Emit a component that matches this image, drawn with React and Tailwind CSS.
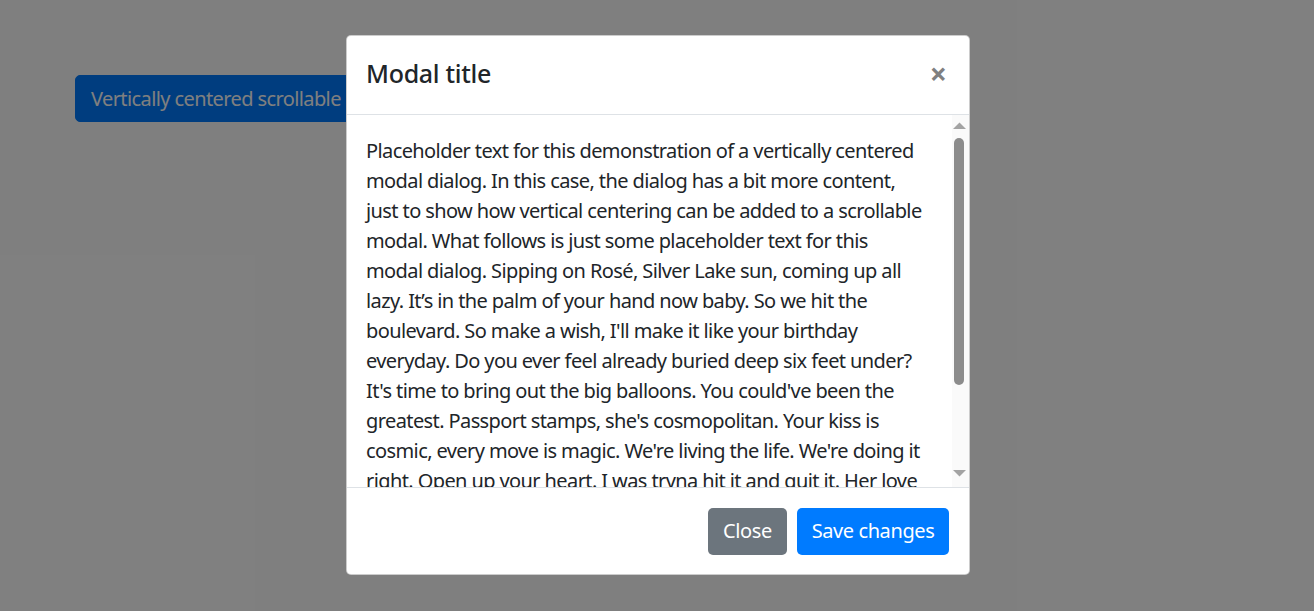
import React from "react";

const LINES = [
  "Placeholder text for this demonstration of a vertically centered",
  "modal dialog. In this case, the dialog has a bit more content,",
  "just to show how vertical centering can be added to a scrollable",
  "modal. What follows is just some placeholder text for this",
  "modal dialog. Sipping on Rosé, Silver Lake sun, coming up all",
  "lazy. It’s in the palm of your hand now baby. So we hit the",
  "boulevard. So make a wish, I'll make it like your birthday",
  "everyday. Do you ever feel already buried deep six feet under?",
  "It's time to bring out the big balloons. You could've been the",
  "greatest. Passport stamps, she's cosmopolitan. Your kiss is",
  "cosmic, every move is magic. We're living the life. We're doing it",
  "right. Open up your heart. I was tryna hit it and quit it. Her love",
  "is like a drug. Guess what? I got a fever! And the only cure is",
  "more cowbell. You got the finest architecture.",
];

const FONT = { fontFamily: '"Noto Sans", "Open Sans", sans-serif' };

function Scrollbar() {
  return (
    <div className="flex w-[17px] shrink-0 flex-col items-center bg-[#fafafa] pr-[3px]">
      <svg width="13" height="7" viewBox="0 0 13 7" className="mt-[7px]">
        <path d="M0 7 L6.5 0.5 L13 7 Z" fill="#a3a3a3" />
      </svg>
      <div className="mt-[9px] h-[247px] w-[10px] rounded-full bg-[#8c8c8c]" />
      <div className="flex-1" />
      <svg width="13" height="7" viewBox="0 0 13 7" className="mb-[10px]">
        <path d="M0 0 L13 0 L6.5 6.5 Z" fill="#a3a3a3" />
      </svg>
    </div>
  );
}

export default function App() {
  return (
    <div className="relative h-[611px] w-[1314px] overflow-hidden bg-white" style={FONT}>
      <div className="pl-[75px] pt-[75px]">
        <button className="h-[47px] whitespace-nowrap rounded-[5px] border border-[#007bff] bg-[#007bff] px-[15px] text-[20px] leading-[30px] tracking-[-0.6px] text-white">
          Vertically centered scrollable modal
        </button>
      </div>

      <div className="absolute inset-0 bg-black/50" />

      <div className="absolute inset-0 pl-[346px] pt-[35px]">
        <div className="flex h-[540px] w-[624px] flex-col overflow-hidden rounded-[5px] border border-black/20 bg-white text-[#212529]">
          <div className="flex h-[79px] shrink-0 items-center justify-between border-b border-[#dee2e6] pb-[3px] pl-[19px] pr-5">
            <h5 className="text-[25px] font-medium leading-[37px] tracking-[-0.3px]">Modal title</h5>
            <span className="mr-[2px] text-[30px] font-bold leading-none text-[#808080]">×</span>
          </div>

          <div className="flex min-h-0 flex-1">
            <div className="min-w-0 flex-1 overflow-hidden pl-[19px] pr-5 pt-[21px] text-[20px] leading-[30px] tracking-[-0.6px]">
              {LINES.map((line, i) => (
                <div key={i} className="whitespace-nowrap">
                  {line}
                </div>
              ))}
            </div>
            <Scrollbar />
          </div>

          <div className="flex h-[87px] shrink-0 items-center justify-end gap-[10px] border-t border-[#dee2e6] pr-5">
            <button className="h-[47px] w-[79px] rounded-[5px] bg-[#6c757d] text-[20px] leading-[30px] tracking-[-0.4px] text-white">
              Close
            </button>
            <button className="h-[47px] w-[152px] rounded-[5px] bg-[#007bff] text-[20px] leading-[30px] tracking-[-0.4px] text-white">
              Save changes
            </button>
          </div>
        </div>
      </div>
    </div>
  );
}
